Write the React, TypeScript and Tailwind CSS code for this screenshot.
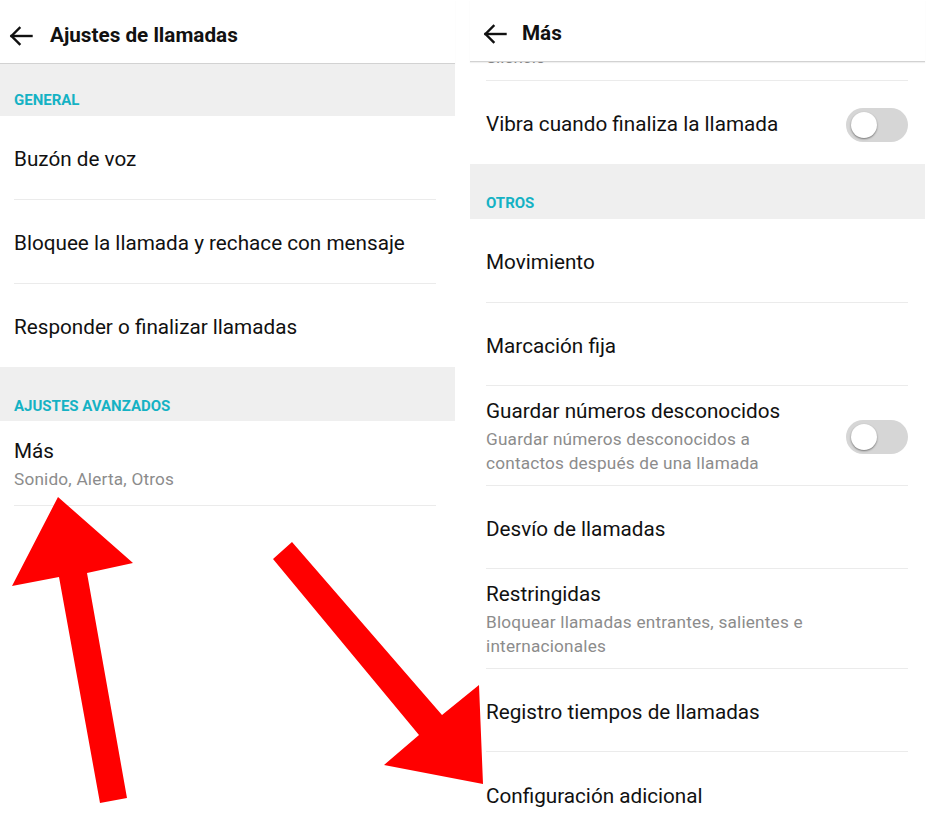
import React from "react";

const font = { fontFamily: "Roboto, 'Noto Sans', sans-serif" };

function Back() {
  return (
    <svg width="24" height="20" viewBox="0 0 24 20" fill="none" stroke="#111" strokeWidth="2.4" strokeLinecap="square">
      <path d="M2.5 10H22.5" />
      <path d="M10.5 2L2.5 10L10.5 18" strokeLinejoin="miter" />
    </svg>
  );
}

function Toggle() {
  return (
    <div className="w-[62px] h-[34px] rounded-full bg-[#d6d6d6] flex items-center pl-[5px] shrink-0">
      <div className="w-[26px] h-[26px] rounded-full bg-white shadow-[0_1px_2px_rgba(0,0,0,0.45)]" />
    </div>
  );
}

function Row({
  title,
  sub,
  h,
  toggle,
  divider = true,
  px,
}: {
  title: string;
  sub?: string[];
  h: string;
  toggle?: boolean;
  divider?: boolean;
  px: string;
}) {
  return (
    <div className={`${h} flex flex-col ${px}`}>
      <div className={`flex-1 flex items-center ${sub ? "pt-[2px]" : "pt-[4px]"}`}>
        <div className="flex-1 flex flex-col">
          <div className="text-[20.7px] leading-[27px] text-[#111]">{title}</div>
          {sub && (
            <div className="mt-[2px]">
              {sub.map((s, i) => (
                <div key={i} className="text-[17.2px] leading-[24px] text-[#8c8c8c] tracking-[0.2px]">
                  {s}
                </div>
              ))}
            </div>
          )}
        </div>
        {toggle && <Toggle />}
      </div>
      {divider && <div className="h-px bg-[#ebebeb] shrink-0" />}
    </div>
  );
}

export default function App() {
  return (
    <div className="relative w-[927px] h-[831px] bg-white overflow-hidden flex" style={font}>
      {/* Left panel */}
      <div className="w-[455px] shrink-0">
        <div className="h-[64px] flex items-center pl-[9px] pt-[8px] border-b border-[#d2d2d2] shadow-[0_1px_1px_rgba(0,0,0,0.06)]">
          <Back />
          <span className="ml-[17px] text-[20.7px] font-bold text-[#111]">Ajustes de llamadas</span>
        </div>
        <div className="bg-[#efefef] h-[52px] flex items-end px-[14px] pb-[5px]">
          <span className="text-[15px] font-bold text-[#15b2c4]">GENERAL</span>
        </div>
        <div className="pr-[19px]">
          <Row px="pl-[14px]" h="h-[84px]" title="Buzón de voz" />
          <Row px="pl-[14px]" h="h-[84px]" title="Bloquee la llamada y rechace con mensaje" />
          <Row px="pl-[14px]" h="h-[83px]" title="Responder o finalizar llamadas" divider={false} />
        </div>
        <div className="bg-[#efefef] h-[54px] flex items-end px-[14px] pb-[4px]">
          <span className="text-[15px] font-bold text-[#15b2c4]">AJUSTES AVANZADOS</span>
        </div>
        <div className="pr-[19px]">
          <div className="h-[85px] flex flex-col pl-[14px]">
            <div className="flex-1 flex flex-col justify-center pt-[3px]">
              <div className="text-[20.7px] leading-[28px] text-[#111]">Más</div>
              <div className="text-[17.2px] leading-[28px] text-[#8c8c8c] tracking-[0.2px]">Sonido, Alerta, Otros</div>
            </div>
            <div className="h-px bg-[#ebebeb]" />
          </div>
        </div>
      </div>

      {/* gap */}
      <div className="w-[15px] shrink-0" />

      {/* Right panel */}
      <div className="w-[455px] shrink-0">
        <div className="h-[62px] flex items-center pl-[13px] pt-[6px] border-b border-[#d2d2d2] shadow-[0_1px_1px_rgba(0,0,0,0.06)] relative z-10 bg-white">
          <Back />
          <span className="ml-[15px] text-[20.7px] font-bold text-[#111]">Más</span>
        </div>
        <div className="pl-[16px] pr-[17px]">
          <div className="h-[18px] overflow-hidden">
            <div className="mt-[-17px] text-[17px] leading-[24px] text-[#8c8c8c]">Silencio</div>
          </div>
          <div className="h-px bg-[#ebebeb]" />
          <Row px="" h="h-[83px]" title="Vibra cuando finaliza la llamada" toggle divider={false} />
        </div>
        <div className="bg-[#efefef] h-[55px] flex items-end px-[16px] pb-[5px]">
          <span className="text-[15px] font-bold text-[#15b2c4]">OTROS</span>
        </div>
        <div className="pl-[16px] pr-[17px]">
          <Row px="" h="h-[84px]" title="Movimiento" />
          <Row px="" h="h-[83px]" title="Marcación fija" />
          <Row
            px=""
            h="h-[100px]"
            title="Guardar números desconocidos"
            sub={["Guardar números desconocidos a", "contactos después de una llamada"]}
            toggle
          />
          <Row px="" h="h-[83px]" title="Desvío de llamadas" />
          <Row
            px=""
            h="h-[100px]"
            title="Restringidas"
            sub={["Bloquear llamadas entrantes, salientes e", "internacionales"]}
          />
          <Row px="" h="h-[83px]" title="Registro tiempos de llamadas" />
          <Row px="" h="h-[84px]" title="Configuración adicional" divider={false} />
        </div>
      </div>

      {/* Red arrows overlay */}
      <svg className="absolute inset-0 pointer-events-none z-20" width="927" height="831" viewBox="0 0 927 831">
        <polygon fill="#ff0000" points="58,497 133,563 87,573 127,798 100,803 59,577 12,586" />
        <polygon fill="#ff0000" points="273,559 292,542 442,715 479,685 483,784 384,765 419,735" />
      </svg>
    </div>
  );
}
